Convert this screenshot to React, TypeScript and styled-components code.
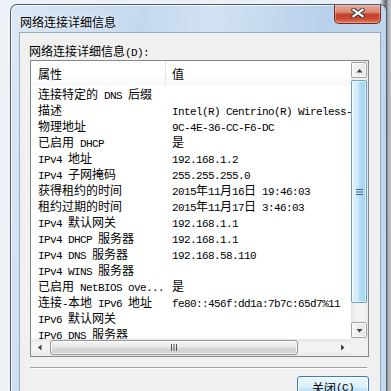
import styled, { createGlobalStyle } from "styled-components";

const GlobalStyle = createGlobalStyle`
  html, body {
    margin: 0;
    padding: 0;
  }
  body {
    width: 391px;
    height: 391px;
    overflow: hidden;
    font-family: "Noto Sans CJK SC", sans-serif;
    font-size: 12px;
    color: #000;
  }
`;

const rows: [string, string][] = [
  ["连接特定的 DNS 后缀", ""],
  ["描述", "Intel(R) Centrino(R) Wireless-N 1030"],
  ["物理地址", "9C-4E-36-CC-F6-DC"],
  ["已启用 DHCP", "是"],
  ["IPv4 地址", "192.168.1.2"],
  ["IPv4 子网掩码", "255.255.255.0"],
  ["获得租约的时间", "2015年11月16日 19:46:03"],
  ["租约过期的时间", "2015年11月17日 3:46:03"],
  ["IPv4 默认网关", "192.168.1.1"],
  ["IPv4 DHCP 服务器", "192.168.1.1"],
  ["IPv4 DNS 服务器", "192.168.58.110"],
  ["IPv4 WINS 服务器", ""],
  ["已启用 NetBIOS ove...", "是"],
  ["连接-本地 IPv6 地址", "fe80::456f:dd1a:7b7c:65d7%11"],
  ["IPv6 默认网关", ""],
  ["IPv6 DNS 服务器", ""],
];

function mixed(text: string) {
  return text
    .split(/([\x00-\xff]+)/)
    .filter(Boolean)
    .map((part, i) =>
      /^[\x00-\xff]+$/.test(part) ? <Latin key={i}>{part}</Latin> : <span key={i}>{part}</span>
    );
}

function ArrowIcon({ dir }: { dir: "up" | "down" | "left" | "right" }) {
  const d = {
    up: "M0.5 4.5 L3.5 1 L6.5 4.5 Z",
    down: "M0.5 1 L3.5 4.5 L6.5 1 Z",
    left: "M4.5 0.5 L1 3.5 L4.5 6.5 Z",
    right: "M1 0.5 L4.5 3.5 L1 6.5 Z",
  }[dir];
  const vertical = dir === "up" || dir === "down";
  return (
    <svg width={vertical ? 7 : 5} height={vertical ? 5 : 7} viewBox={vertical ? "0 0 7 5" : "0 0 5 7"}>
      <path d={d} fill="#404040" />
    </svg>
  );
}

export default function App() {
  return (
    <>
      <GlobalStyle />
      <Desktop>
        <Window>
          <TitleBar>
            <Title>网络连接详细信息</Title>
            <CloseButton>
              <svg width="14" height="10" viewBox="0 0 14 10">
                <path d="M2.5 1.8 L11.5 8.2 M11.5 1.8 L2.5 8.2" stroke="#3a3a3a" strokeWidth="4.2" strokeLinecap="square" />
                <path d="M2.5 1.8 L11.5 8.2 M11.5 1.8 L2.5 8.2" stroke="#fff" strokeWidth="2.2" strokeLinecap="square" />
              </svg>
            </CloseButton>
          </TitleBar>
          <Client>
            <Label>{mixed("网络连接详细信息(D):")}</Label>
            <ListBox>
              <ListContent>
                <Header>
                  <HeaderCell $first>属性</HeaderCell>
                  <HeaderCell>值</HeaderCell>
                </Header>
                {rows.map(([name, value]) => (
                  <Row key={name}>
                    <Cell $first>{mixed(name)}</Cell>
                    <Cell>{mixed(value)}</Cell>
                  </Row>
                ))}
              </ListContent>
              <VScroll>
                <VButton>
                  <ArrowIcon dir="up" />
                </VButton>
                <VThumb>
                  <svg width="7" height="8" viewBox="0 0 7 8">
                    <path d="M0 1.5 H7 M0 4 H7 M0 6.5 H7" stroke="#3d6f96" strokeWidth="1" />
                  </svg>
                </VThumb>
                <Spacer />
                <VButton $bottom>
                  <ArrowIcon dir="down" />
                </VButton>
              </VScroll>
              <HScroll>
                <HButton>
                  <ArrowIcon dir="left" />
                </HButton>
                <HThumb>
                  <svg width="8" height="7" viewBox="0 0 8 7">
                    <path d="M1.5 0 V7 M4 0 V7 M6.5 0 V7" stroke="#555" strokeWidth="1" />
                  </svg>
                </HThumb>
                <Spacer />
                <HButton>
                  <ArrowIcon dir="right" />
                </HButton>
              </HScroll>
              <Corner />
            </ListBox>
            <Footer>
              <Separator />
              <PushButton>{mixed("关闭(C)")}</PushButton>
            </Footer>
          </Client>
        </Window>
      </Desktop>
    </>
  );
}

const Latin = styled.span`
  font-family: "Liberation Mono", monospace;
  font-size: 11px;
  letter-spacing: -0.6px;
  white-space: pre;
`;

const Desktop = styled.div`
  width: 391px;
  height: 391px;
  box-sizing: border-box;
  overflow: hidden;
  display: flex;
  padding: 4px 0 0 10px;
  background: linear-gradient(to right, #edf2f8 0, #e8eef5 380px, #5b6168 386px, #a9acaf 388px, #c4c6c8 391px);
`;

const Window = styled.div`
  flex-shrink: 0;
  width: 377px;
  height: 420px;
  box-sizing: border-box;
  display: flex;
  flex-direction: column;
  padding: 0 5px 0 8px;
  border: 1px solid #505e6e;
  border-bottom: none;
  border-radius: 7px 7px 0 0;
  background: linear-gradient(100deg, #dce8f5 0%, #c3d8ef 30%, #d2e2f3 45%, #b9d1eb 70%, #c6daf0 100%);
  box-shadow: inset 1px 1px 0 rgba(255, 255, 255, 0.7);
`;

const TitleBar = styled.div`
  height: 27px;
  display: flex;
  align-items: flex-start;
`;

const Title = styled.div`
  padding: 9px 0 0 1px;
  font-size: 12px;
  line-height: 16px;
  color: #000;
  text-shadow: 0 0 6px rgba(255, 255, 255, 0.9);
`;

const CloseButton = styled.div`
  margin-left: auto;
  width: 47px;
  height: 19px;
  box-sizing: border-box;
  display: flex;
  align-items: center;
  justify-content: center;
  padding-bottom: 2px;
  border: 1px solid #6e2e24;
  border-top: none;
  border-radius: 0 0 5px 5px;
  background: linear-gradient(#e8ab9b 0%, #d98670 40%, #c5412a 52%, #c94a31 75%, #e07a5c 100%);
  box-shadow: inset 0 0 0 1px rgba(255, 220, 210, 0.35);
`;

const Client = styled.div`
  flex: 1;
  display: flex;
  flex-direction: column;
  padding: 10px 0 0 10px;
  border: 1px solid #98aabe;
  background: #f0f0f0;
`;

const Label = styled.div`
  height: 16px;
  margin: 0 0 1px -1px;
  line-height: 16px;
  white-space: nowrap;
`;

const ListBox = styled.div`
  width: 339px;
  height: 297px;
  box-sizing: border-box;
  display: grid;
  grid-template-columns: 320px 17px;
  grid-template-rows: 278px 17px;
  border: 1px solid #828790;
  background: #fff;
`;

const ListContent = styled.div`
  overflow: hidden;
`;

const Header = styled.div`
  height: 25px;
  display: grid;
  grid-template-columns: 135px 1fr;
  background: linear-gradient(#ffffff 0%, #ffffff 55%, #f7f8fa 100%);
`;

const HeaderCell = styled.div<{ $first?: boolean }>`
  line-height: 25px;
  padding-left: ${(p) => (p.$first ? "7px" : "6px")};
  border-right: ${(p) => (p.$first ? "1px solid #e3e5e8" : "none")};
`;

const Row = styled.div`
  height: 16px;
  display: grid;
  grid-template-columns: 135px 1fr;
`;

const Cell = styled.div<{ $first?: boolean }>`
  line-height: 16px;
  padding-left: ${(p) => (p.$first ? "7px" : "6px")};
  white-space: pre;
  overflow: hidden;
`;

const VScroll = styled.div`
  display: flex;
  flex-direction: column;
  background: linear-gradient(to right, #e6e6e6, #f3f3f3 30%, #f3f3f3 70%, #e9e9e9);
`;

const VButton = styled.div<{ $bottom?: boolean }>`
  width: 16px;
  height: 16px;
  box-sizing: border-box;
  margin: ${(p) => (p.$bottom ? "0 0 1px" : "1px 0 0")};
  display: flex;
  align-items: center;
  justify-content: center;
  border: 1px solid #a2a2a2;
  border-radius: 2px;
  background: linear-gradient(to right, #f6f6f6, #e4e4e4);
  box-shadow: inset 0 0 0 1px rgba(255, 255, 255, 0.8);
`;

const VThumb = styled.div`
  width: 16px;
  height: 223px;
  margin-top: 2px;
  box-sizing: border-box;
  display: flex;
  align-items: center;
  justify-content: center;
  border: 1px solid #6d9fc7;
  border-radius: 2px;
  background: linear-gradient(to right, #e4f4fc, #cbe8f8 45%, #b0dcf5 55%, #a5d3f0);
  box-shadow: inset 0 0 0 1px rgba(255, 255, 255, 0.6);
`;

const Spacer = styled.div`
  flex: 1;
`;

const HScroll = styled.div`
  display: flex;
  align-items: center;
  background: linear-gradient(#e6e6e6, #f3f3f3 30%, #f3f3f3 70%, #e9e9e9);
`;

const HButton = styled.div`
  width: 17px;
  height: 17px;
  display: flex;
  align-items: center;
  justify-content: center;
`;

const HThumb = styled.div`
  width: 248px;
  height: 15px;
  margin-left: 2px;
  box-sizing: border-box;
  display: flex;
  align-items: center;
  justify-content: center;
  border: 1px solid #979797;
  border-radius: 3px;
  background: linear-gradient(#f4f4f4 0%, #e9e9e9 48%, #d8d8d8 52%, #d0d0d0 100%);
  box-shadow: inset 0 0 0 1px rgba(255, 255, 255, 0.7);
`;

const Corner = styled.div`
  background: #f0f0f0;
`;

const Footer = styled.div`
  width: 339px;
  display: flex;
  flex-direction: column;
`;

const Separator = styled.div`
  width: 337px;
  height: 1px;
  margin-top: 10px;
  background: #a0a0a0;
  border-bottom: 1px solid #fff;
`;

const PushButton = styled.div`
  align-self: flex-end;
  width: 72px;
  height: 23px;
  margin-top: 7px;
  box-sizing: border-box;
  display: flex;
  align-items: center;
  justify-content: center;
  border: 1px solid #3c7fb1;
  border-radius: 3px;
  background: linear-gradient(#ebf7fd 0%, #dcf1fc 48%, #c4e6f8 52%, #b5dcf4 100%);
  box-shadow: inset 0 0 0 1px rgba(255, 255, 255, 0.7);
  line-height: 16px;
  white-space: nowrap;
`;
